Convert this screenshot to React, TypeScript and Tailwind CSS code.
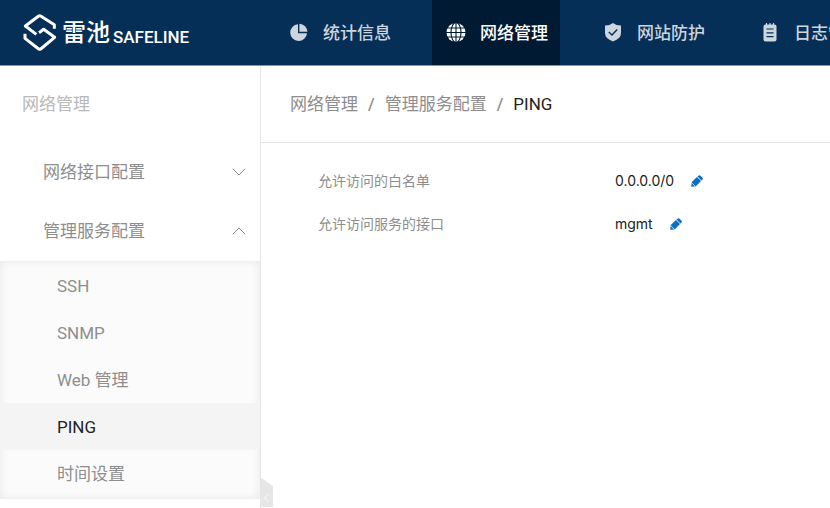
import React, { useState } from 'react';
import { ChevronDown, ChevronUp } from 'lucide-react';

type IconProps = { className?: string };

const LogoMark = () => (
  <svg width="35" height="40" viewBox="0 0 105 120" fill="none" stroke="white" strokeWidth="9" strokeLinejoin="round">
    <path d="M97 47V35L56 9Q53 7 50 9L10 39L43 64" />
    <path d="M9 62V76L50 108Q53 110 56 108L98 73L65 49L51 59" />
  </svg>
);

const PieIcon = ({ className }: IconProps) => (
  <svg className={className} width="20" height="20" viewBox="0 0 20 20" fill="currentColor">
    <path d="M9 1.2V10.2H18A8.4 8.4 0 1 1 9 1.2Z" />
    <path d="M10.4 0.8A8.2 8.2 0 0 1 18.4 8.8H10.4Z" />
  </svg>
);

const GlobeIcon = ({ className }: IconProps) => (
  <svg className={className} width="20" height="20" viewBox="0 0 20 20">
    <circle cx="10" cy="9.5" r="9.5" fill="currentColor" />
    <g fill="none" stroke="#001a33" strokeWidth="1.1">
      <ellipse cx="10" cy="9.5" rx="5" ry="10" />
      <path d="M10 0V20M0 9.5H20M1 5H19M1 14H19" />
    </g>
  </svg>
);

const ShieldIcon = ({ className }: IconProps) => (
  <svg className={className} width="20" height="20" viewBox="0 0 20 20">
    <path d="M10 0Q13.5 2.6 18 2.5V10Q18 15.7 10 18.4Q2 15.7 2 10V2.5Q6.5 2.6 10 0Z" fill="currentColor" />
    <path d="M5.8 9L9 12L14.2 6.5" fill="none" stroke="#052f57" strokeWidth="1.4" />
  </svg>
);

const LogIcon = ({ className }: IconProps) => (
  <svg className={className} width="20" height="20" viewBox="0 0 20 20">
    <rect x="3.5" y="1.5" width="13" height="17" rx="2" fill="currentColor" />
    <path d="M6.5 0V3M10 0V3M13.5 0V3" stroke="currentColor" strokeWidth="1.2" />
    <path d="M6.5 6H13.5M6.5 9.8H13.5M6.5 13.6H13.5" stroke="#052f57" strokeWidth="1.2" />
  </svg>
);

const PencilIcon = () => (
  <svg width="12" height="12" viewBox="0 0 12 12" fill="#0b6fc2">
    <path d="M0.3 11.7L0.5 8L4 11.5Z" />
    <path d="M0.5 7.3L6 2L10 6L4.7 11.4Z" />
    <path d="M6.5 1.6L7.8 0.4Q8.5 -0.1 9.2 0.4L11.6 2.8Q12.1 3.5 11.6 4.2L10.4 5.5Z" />
  </svg>
);

const navItems = [
  { label: '统计信息', icon: PieIcon },
  { label: '网络管理', icon: GlobeIcon },
  { label: '网站防护', icon: ShieldIcon },
  { label: '日志管理', icon: LogIcon },
];

const serviceItems = ['SSH', 'SNMP', 'Web 管理', 'PING', '时间设置'];

const settings = [
  { label: '允许访问的白名单', value: '0.0.0.0/0' },
  { label: '允许访问服务的接口', value: 'mgmt' },
];

const App = () => {
  const [activeNav, setActiveNav] = useState('网络管理');
  const [activeItem, setActiveItem] = useState('PING');
  const [open, setOpen] = useState(true);

  return (
    <div className="flex min-h-screen flex-col overflow-hidden bg-white font-[Roboto,'Noto_Sans_CJK_SC',sans-serif] text-[17px] leading-6 text-[#8e8e8e]">
      <header className="flex h-[66px] border-b border-[#8298ae] bg-[#052f57]">
        <a href="#" className="flex w-[275px] shrink-0 items-center pl-[22px] text-white">
          <LogoMark />
          <span className="ml-[5px] flex items-center gap-[3px]">
            <span className="text-2xl font-medium">雷池</span>
            <span className="pt-2 font-medium">SAFELINE</span>
          </span>
        </a>
        <nav className="flex min-w-0 flex-1 gap-[29px] overflow-hidden">
          {navItems.map(({ label, icon: Icon }) => (
            <a
              key={label}
              href="#"
              onClick={() => setActiveNav(label)}
              className={`flex w-32 shrink-0 items-center gap-3.5 pl-3.5 font-medium whitespace-nowrap ${
                activeNav === label ? 'bg-[#001a33] text-white' : 'text-[#cdd5dd]'
              }`}
            >
              <Icon className="shrink-0" />
              {label}
            </a>
          ))}
        </nav>
      </header>

      <div className="flex flex-1">
        <aside className="relative w-[261px] shrink-0 border-r border-[#e6e6e6]">
          <h2 className="flex h-[76px] items-center pl-[22px] text-[#b9b9b9]">网络管理</h2>
          <button type="button" className="flex h-[59px] w-full items-center justify-between pr-[9px] pl-[43px]">
            网络接口配置
            <ChevronDown size={24} strokeWidth={1} />
          </button>
          <button
            type="button"
            onClick={() => setOpen(!open)}
            className="flex h-[59px] w-full items-center justify-between pr-[9px] pl-[43px]"
          >
            管理服务配置
            <ChevronUp size={24} strokeWidth={1} />
          </button>
          {open && (
            <ul className="mt-px bg-[#fbfbfb] pt-px pb-0.5 shadow-[inset_0_0_10px_rgba(0,0,0,0.08)]">
              {serviceItems.map((item) => (
                <li key={item}>
                  <a
                    href="#"
                    onClick={() => setActiveItem(item)}
                    className={`flex h-[47px] items-center pl-[57px] ${
                      activeItem === item ? 'bg-[#f4f4f4] text-[#222]' : ''
                    }`}
                  >
                    {item}
                  </a>
                </li>
              ))}
            </ul>
          )}
          <button
            type="button"
            aria-label="收起"
            className="absolute -right-[13px] bottom-px h-[30px] w-[13px] bg-[#e6e6e6] text-white [clip-path:polygon(0_0,100%_30%,100%_100%,0_100%)]"
          >
            <svg width="13" height="30" viewBox="0 0 13 30" fill="none" stroke="currentColor">
              <path d="M8.5 17L4.5 21L8.5 25" />
            </svg>
          </button>
        </aside>

        <main className="min-w-0 flex-1">
          <div className="flex h-[77px] items-center gap-2.5 border-b border-[#e6e6e6] pl-[29px]">
            <a href="#">网络管理</a>
            <span className="font-medium">/</span>
            <a href="#">管理服务配置</a>
            <span className="font-medium">/</span>
            <span className="text-[#222]">PING</span>
          </div>
          <dl className="pt-4 pl-[57px] text-sm">
            {settings.map(({ label, value }) => (
              <div key={label} className="flex h-[43px] items-center">
                <dt className="w-[297px]">{label}</dt>
                <dd className="flex items-center gap-[17px] font-[Inter,sans-serif] text-[#222]">
                  {value}
                  <button type="button" aria-label="编辑">
                    <PencilIcon />
                  </button>
                </dd>
              </div>
            ))}
          </dl>
        </main>
      </div>
    </div>
  );
};

export default App;
